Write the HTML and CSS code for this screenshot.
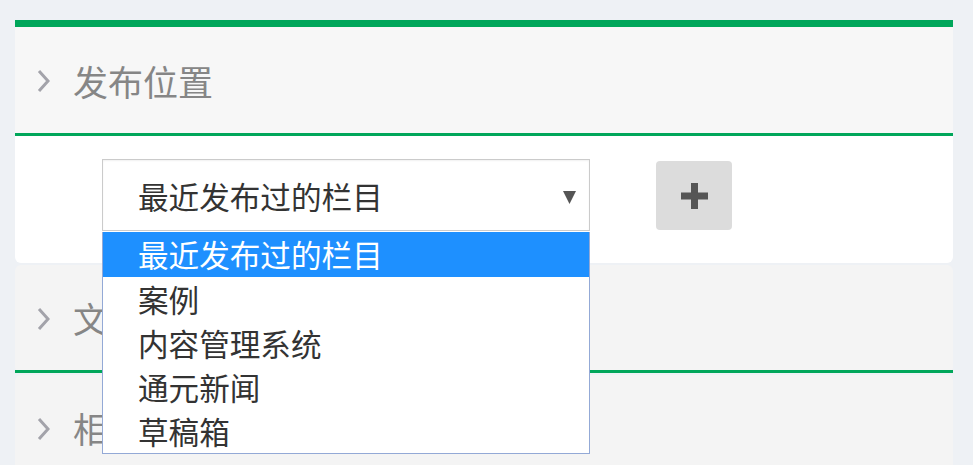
FILE: index.html
```html
<!DOCTYPE html>
<html>
	<head>
		<meta charset="utf-8">
		<title>发布位置</title>
		<link rel="stylesheet" href="styles.css">
	</head>
	<body>
		<div class="panel">
			<!-- 发布位置 -->
			<div class="section active">
				<div class="sec-head">
					<svg class="chev" width="13" height="24" viewBox="0 0 13 24"><polyline points="2,2 11,12 2,22" fill="none" stroke="#a3a3aa" stroke-width="3"/></svg>
					<span>发布位置</span>
				</div>
				<div class="sec-body">
					<div class="select">
						<span class="select-val">最近发布过的栏目</span>
						<svg class="caret" width="13" height="14" viewBox="0 0 13 14"><polygon points="0,1 13,1 6.5,14" fill="#555"/></svg>
						<ul class="select-list">
							<li class="ac">最近发布过的栏目</li>
							<li>案例</li>
							<li>内容管理系统</li>
							<li>通元新闻</li>
							<li>草稿箱</li>
						</ul>
					</div>
					<a href="javascript:;" class="btn-add">
						<svg width="27" height="26" viewBox="0 0 27 26"><rect x="10" y="0" width="7" height="26" fill="#555"/><rect x="0" y="9.5" width="27" height="7" fill="#555"/></svg>
					</a>
				</div>
			</div>
			<!-- 文 -->
			<div class="section">
				<div class="sec-head">
					<svg class="chev" width="13" height="24" viewBox="0 0 13 24"><polyline points="2,2 11,12 2,22" fill="none" stroke="#a3a3aa" stroke-width="3"/></svg>
					<span>文</span>
				</div>
			</div>
			<!-- 相 -->
			<div class="section">
				<div class="sec-head">
					<svg class="chev" width="13" height="24" viewBox="0 0 13 24"><polyline points="2,2 11,12 2,22" fill="none" stroke="#a3a3aa" stroke-width="3"/></svg>
					<span>相</span>
				</div>
			</div>
		</div>
	</body>
</html>
```

FILE: styles.css
```css
*{
	margin: 0;
	padding: 0;
}
li{
	list-style: none;
}
body{
	background: #eef1f5;
	padding: 20px 20px 0 15px;
	font-family: "Noto Sans CJK SC", "Liberation Sans", sans-serif;
	overflow: hidden;
	height: 445px;
}
.panel{
	width: 938px;
}
.section{
	margin-bottom: 2px;
	border-radius: 6px;
	background: #f4f4f4;
}
.section.active{
	border-top: 7px solid #00a65a;
	border-radius: 0 0 6px 6px;
	background: #fff;
}
.sec-head{
	height: 105px;
	display: flex;
	align-items: center;
	padding-left: 22px;
	border-bottom: 3px solid #00a65a;
	color: #868686;
	font-size: 35px;
}
.section.active .sec-head{
	height: 106px;
	background: #f7f7f7;
}
.section:last-child .sec-head{
	border-bottom: none;
}
.chev{
	margin-right: 23px;
	margin-top: 2px;
}
.sec-body{
	height: 127px;
	display: flex;
	align-items: flex-start;
	padding: 23px 0 0 87px;
	box-sizing: border-box;
}
.select{
	position: relative;
	width: 488px;
	height: 72px;
	box-sizing: border-box;
	border: 1px solid #cbcbcb;
	box-shadow: inset 0 1px 2px rgba(0,0,0,0.06);
	display: flex;
	align-items: center;
	padding: 0 13px 0 35px;
	font-size: 30.6px;
	color: #333;
	background: #fff;
}
.select-val{
	flex: 1;
	margin-top: 2px;
}
.caret{
	margin-top: 4px;
}
.select-list{
	position: absolute;
	top: 72px;
	left: -1px;
	width: 488px;
	box-sizing: border-box;
	border: 1px solid #93a9d6;
	border-top: none;
	background: #fff;
	z-index: 6;
}
.select-list li{
	height: 44px;
	line-height: 44px;
	padding-left: 35px;
	font-size: 30.6px;
	color: #333;
}
.select-list li.ac{
	background: #1e90ff;
	color: #fff;
	height: 45px;
}
.btn-add{
	margin: 2px 0 0 66px;
	width: 76px;
	height: 69px;
	background: #dcdcdc;
	border-radius: 4px;
	display: flex;
	align-items: center;
	justify-content: center;
}
.btn-add svg{
	margin-top: 1px;
}
```
